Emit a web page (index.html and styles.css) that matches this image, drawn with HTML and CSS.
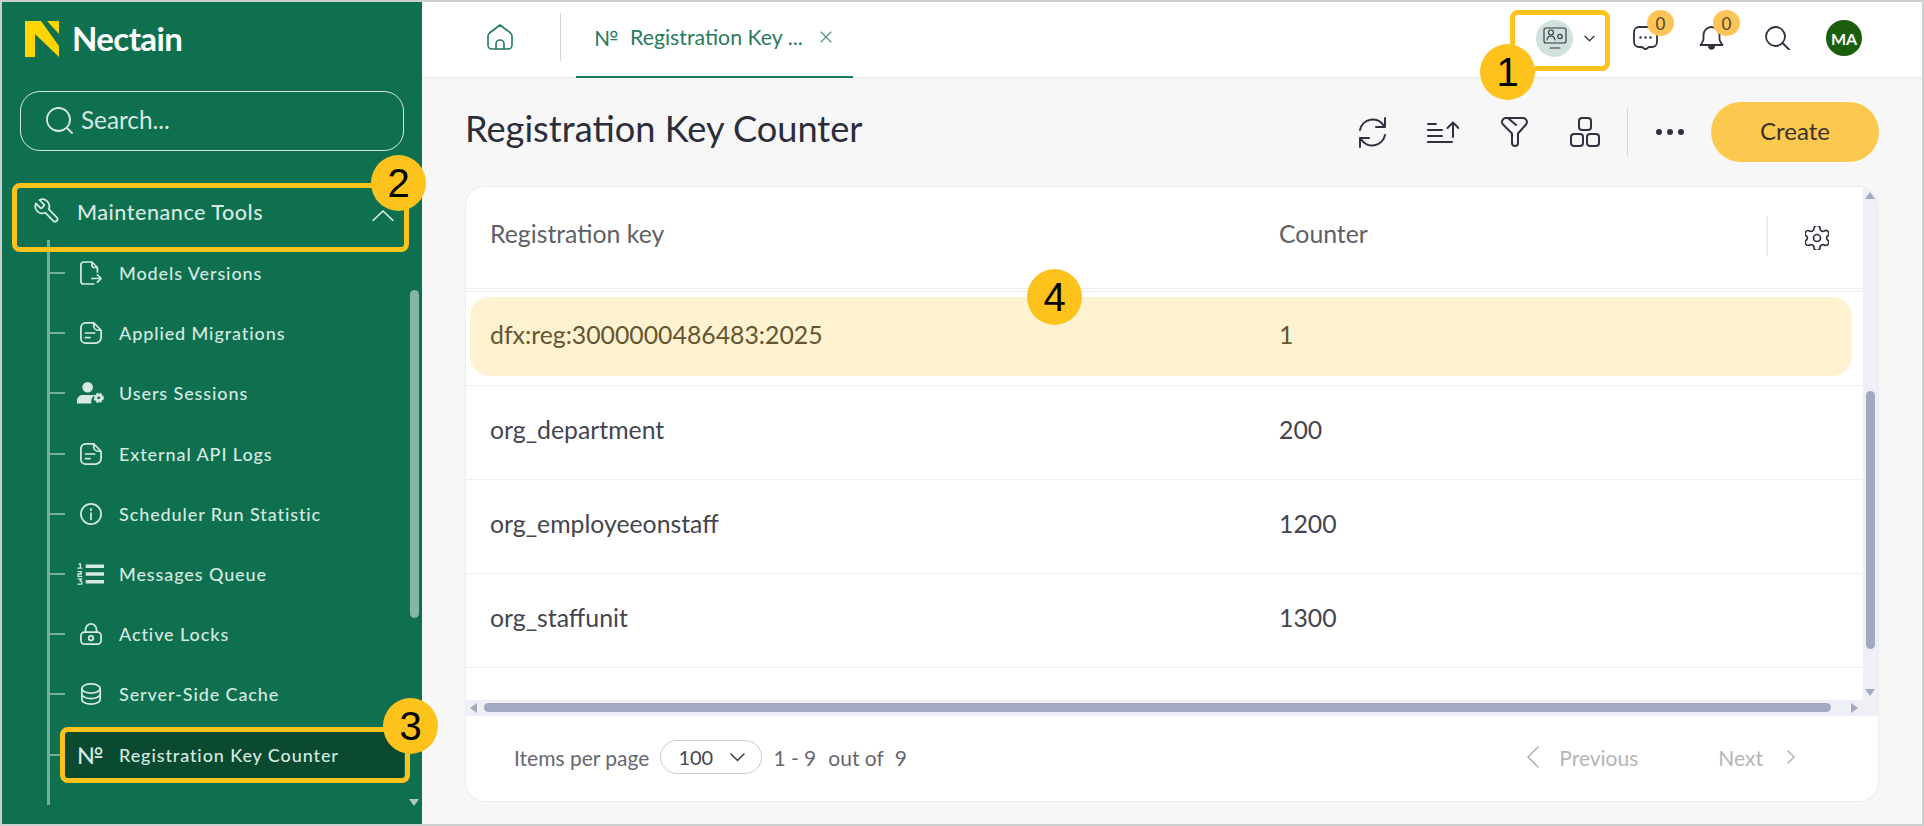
FILE: index.html
```html
<!DOCTYPE html>
<html lang="en">
<head>
<meta charset="utf-8">
<title>Registration Key Counter</title>
<link rel="stylesheet" href="styles.css">
</head>
<body>
<div class="frame">
  <aside class="sidebar">
    <div class="brand">
      <svg class="brand-mark" viewBox="0 0 34 36"><path fill="#ffd500" d="M0 0H16L34 25V36L10 13V36H0Z"/><path fill="#ffd500" d="M22 0H34V13Z"/></svg>
      <span class="brand-name">Nectain</span>
    </div>
    <div class="search">
      <svg class="search-icon" viewBox="0 0 27 27"><circle cx="12.5" cy="12.5" r="11.5"/><path d="M21 21l5 5"/></svg>
      <span>Search...</span>
    </div>
    <div class="group-head">
      <svg class="group-icon" viewBox="0 0 24 24"><path transform="translate(24,0) scale(-1,1)" d="M14.7 6.3a1 1 0 0 0 0 1.4l1.600 1.600a1 1 0 0 0 1.400 0l3.770-3.770a6 6 0 0 1-7.940 7.940l-6.910 6.910a2.120 2.120 0 0 1-3-3l6.910-6.910a6 6 0 0 1 7.940-7.940l-3.760 3.760z"/></svg>
      <span class="group-label">Maintenance Tools</span>
      <svg class="group-chevron" viewBox="0 0 22 11"><path d="M1 10.500L11 1l10 9.500"/></svg>
    </div>
    <div class="nav-wrap">
      <ul class="nav">
        <li class="nav-item"><svg class="nav-icon" viewBox="0 0 24 26"><path d="M19 12V7l-6-6H4a3 3 0 0 0-3 3v18a3 3 0 0 0 3 3h11M13 1v3a3 3 0 0 0 3 3h3M13 19h10M19 15l4 4-4 4"/></svg><span>Models Versions</span></li>
        <li class="nav-item"><svg class="nav-icon" viewBox="0 0 24 24"><path d="M6 1h9l8 8v8a6 6 0 0 1-6 6H6a5 5 0 0 1-5-5V6a5 5 0 0 1 5-5zM15 1v3a5 5 0 0 0 5 5h3M6 12h10M6 17h5"/></svg><span>Applied Migrations</span></li>
        <li class="nav-item"><svg class="nav-icon nav-icon-wide" viewBox="0 0 29 24"><circle class="solid" cx="11" cy="6" r="5.500"/><path class="solid" d="M0 23v-3c0-4 3-6 6-6h9c2 0 3 .5 3 .5a8 8 0 0 0-3 8.500z"/><circle class="gear" cx="22.500" cy="17" r="4"/><circle class="gear-hole" cx="22.500" cy="17" r="1.500"/></svg><span>Users Sessions</span></li>
        <li class="nav-item"><svg class="nav-icon" viewBox="0 0 24 24"><path d="M6 1h9l8 8v8a6 6 0 0 1-6 6H6a5 5 0 0 1-5-5V6a5 5 0 0 1 5-5zM15 1v3a5 5 0 0 0 5 5h3M6 12h10M6 17h5"/></svg><span>External API Logs</span></li>
        <li class="nav-item"><svg class="nav-icon" viewBox="0 0 24 24"><circle cx="12" cy="12" r="11"/><path d="M12 11v7M12 6.500v1.500"/></svg><span>Scheduler Run Statistic</span></li>
        <li class="nav-item"><svg class="nav-icon nav-icon-wide" viewBox="0 0 29 22"><path class="thick" d="M9 3h19M9 11h19M9 19h19"/><path class="thin" d="M2 .8l1.500-.5V5M1 5h4M1 8.500h3.500v2.500H1v2.500h4M1 16h4l-2 2 2 1v2.500H1"/></svg><span>Messages Queue</span></li>
        <li class="nav-item"><svg class="nav-icon" viewBox="0 0 24 24"><rect x="1" y="10" width="22" height="13" rx="4"/><path d="M6 10V7a6 6 0 0 1 12 0v3"/><circle cx="12" cy="16.500" r="2.500"/></svg><span>Active Locks</span></li>
        <li class="nav-item"><svg class="nav-icon" viewBox="0 0 24 24"><ellipse cx="12" cy="6" rx="10" ry="5"/><path d="M2 6v12c0 3 4.500 5 10 5s10-2 10-5V6M2 12c0 3 4.500 5 10 5s10-2 10-5"/></svg><span>Server-Side Cache</span></li>
        <li class="nav-item nav-item-active"><span class="nav-no">№</span><span>Registration Key Counter</span></li>
      </ul>
      <div class="side-scroll">
        <div class="side-thumb"></div>
        <div class="side-arrow"></div>
      </div>
    </div>
  </aside>

  <main class="main">
    <header class="topbar">
      <div class="home-cell">
        <svg class="home-icon" viewBox="0 0 26 26"><path d="M13 1L2.500 9A4 4 0 0 0 1 12v9a4 4 0 0 0 4 4h16a4 4 0 0 0 4-4v-9a4 4 0 0 0-1.500-3zM9 25v-5a4 4 0 0 1 8 0v5"/></svg>
      </div>
      <div class="tab">
        <span class="tab-no">№</span>
        <span class="tab-title">Registration Key ...</span>
        <svg class="tab-close" viewBox="0 0 12 12"><path d="M1 1l10 10M11 1L1 11"/></svg>
      </div>
      <div class="top-actions">
        <div class="view-switch">
          <span class="view-circle">
            <svg class="view-icon" viewBox="0 0 24 24"><rect x="1" y="2" width="22" height="15" rx="2"/><path d="M7 22h10M4 14c.500-3 2-4 4-4s3.500 1 4 4"/><circle cx="8" cy="6.500" r="2.500"/><circle cx="17" cy="10.500" r="2.200"/></svg>
          </span>
          <svg class="view-chevron" viewBox="0 0 12 7"><path d="M1 1l5 5 5-5"/></svg>
        </div>
        <div class="top-icon top-chat">
          <svg viewBox="0 0 25 24"><path d="M6 1h13a5 5 0 0 1 5 5v10a5 5 0 0 1-5 5h-3l-3.500 2.500L9 21H6a5 5 0 0 1-5-5V6a5 5 0 0 1 5-5z"/><path class="dots" d="M7.500 11.500h.1M12.500 11.500h.1M17.500 11.500h.1"/></svg>
          <span class="count">0</span>
        </div>
        <div class="top-icon top-bell">
          <svg viewBox="0 0 25 24"><path d="M12.500 1a8 8 0 0 0-8 8v4c0 2-1.500 4-3 6h22c-1.500-2-3-4-3-6V9a8 8 0 0 0-8-8z"/><path class="solid-dark" d="M9 20h7c0 5-7 5-7 0z"/></svg>
          <span class="count">0</span>
        </div>
        <svg class="top-search" viewBox="0 0 26 24"><circle cx="10.500" cy="10.500" r="9.500"/><path d="M17.500 17l7 7"/></svg>
        <span class="avatar">MA</span>
      </div>
    </header>

    <section class="content">
      <div class="title-row">
        <h1 class="page-title">Registration Key Counter</h1>
        <div class="tools">
          <svg class="tool tool-refresh" viewBox="0 0 31 31"><path d="M3 13A13 13 0 0 1 27 9M28 1v9h-9M28 18A13 13 0 0 1 4 22M3 30v-9h9"/></svg>
          <svg class="tool tool-sort" viewBox="0 0 32 22"><path d="M1 3h8M1 9h14M1 15h14M1 21h24M26 16V2M20.500 7L26 1.500 31.500 7"/></svg>
          <svg class="tool tool-filter" viewBox="0 0 28 30"><path d="M5 1h18a4 4 0 0 1 3 6.500l-8 9V26a3 3 0 0 1-6 0v-9.500l-9-9A4 4 0 0 1 5 1zM8 1l8 7"/></svg>
          <svg class="tool tool-shapes" viewBox="0 0 30 30"><rect x="9" y="1" width="12" height="12" rx="3"/><rect x="1" y="17" width="12" height="12" rx="3"/><rect x="17" y="17" width="12" height="12" rx="3"/></svg>
          <span class="tools-divider"></span>
          <svg class="tool-more" viewBox="0 0 28 6"><circle cx="3" cy="3" r="3"/><circle cx="14" cy="3" r="3"/><circle cx="25" cy="3" r="3"/></svg>
          <button class="create-btn" type="button">Create</button>
        </div>
      </div>

      <div class="card">
        <div class="table-area">
          <div class="table">
            <div class="table-head">
              <div class="cell-key">Registration key</div>
              <div class="cell-count">Counter</div>
              <div class="head-tail">
                <svg class="gear-icon" viewBox="0 0 24 24"><path d="M9 2.500a3 3 0 0 1 6 0 3 3 0 0 0 4.300 2.500 3 3 0 0 1 3 5.200 3 3 0 0 0 0 3.600 3 3 0 0 1-3 5.200A3 3 0 0 0 15 21.500a3 3 0 0 1-6 0A3 3 0 0 0 4.700 19a3 3 0 0 1-3-5.200 3 3 0 0 0 0-3.600 3 3 0 0 1 3-5.200A3 3 0 0 0 9 2.500z"/><circle cx="12" cy="12" r="3.500"/></svg>
              </div>
            </div>
            <div class="row row-selected"><div class="row-pill"><div class="cell-key">dfx:reg:3000000486483:2025</div><div class="cell-count">1</div></div></div>
            <div class="row"><div class="cell-key">org_department</div><div class="cell-count">200</div></div>
            <div class="row"><div class="cell-key">org_employeeonstaff</div><div class="cell-count">1200</div></div>
            <div class="row"><div class="cell-key">org_staffunit</div><div class="cell-count">1300</div></div>
          </div>
          <div class="v-rail">
            <span class="arrow-up"></span>
            <span class="v-thumb"></span>
            <span class="arrow-down"></span>
          </div>
        </div>
        <div class="h-rail">
          <span class="arrow-left"></span>
          <span class="h-thumb"></span>
          <span class="arrow-right"></span>
        </div>
        <footer class="pager">
          <span>Items per page</span>
          <span class="page-select"><span>100</span><svg class="select-chevron" viewBox="0 0 15 9"><path d="M1 1l6.500 6.500L14 1"/></svg></span>
          <span class="range">1 - 9</span>
          <span class="out-of">out of</span>
          <span class="total">9</span>
          <div class="pager-nav">
            <svg class="prev-icon" viewBox="0 0 13 22"><path d="M12 1L2 11l10 10"/></svg>
            <span class="prev-label">Previous</span>
            <span class="next-label">Next</span>
            <svg class="next-icon" viewBox="0 0 8 14"><path d="M1 1l6 6-6 6"/></svg>
          </div>
        </footer>
      </div>
    </section>
  </main>

  <div class="mark-box mark-box-1"></div>
  <div class="mark-box mark-box-2"></div>
  <div class="mark-box mark-box-3"></div>
  <div class="callout callout-1">1</div>
  <div class="callout callout-2">2</div>
  <div class="callout callout-3">3</div>
  <div class="callout callout-4">4</div>
</div>
</body>
</html>
```
FILE: styles.css
```css
* { box-sizing: border-box; }
html, body { margin: 0; padding: 0; }
body { width: 1924px; height: 826px; overflow: hidden; font-family: Lato, "Noto Sans", sans-serif; color: #2b2d3a; }
.frame { position: relative; display: flex; width: 1924px; height: 826px; border: 2px solid #cbcfcd; background: #f7f7f8; overflow: hidden; }
svg { display: block; fill: none; stroke: currentColor; stroke-linecap: round; stroke-linejoin: round; flex: none; }

/* Sidebar */
.sidebar { width: 420px; flex: none; background: #0f7050; color: #d6e9e1; display: flex; flex-direction: column; }
.brand { display: flex; align-items: center; height: 36px; margin: 19px 0 0 23px; }
.brand-mark { width: 34px; height: 36px; stroke: none; }
.brand-name { margin: -3px 0 0 13px; font-size: 33px; font-weight: 700; color: #fff; letter-spacing: -0.6px; }
.search { display: flex; align-items: center; width: 384px; height: 60px; margin: 34px 0 0 18px; border: 1px solid #d6e9e1; border-radius: 20px; padding-left: 25px; font-size: 24.300px; color: #d6e9e1; }
.search span { margin-top: -4px; }
.search-icon { width: 27px; height: 27px; margin: -1px 8px 0 0; stroke-width: 1.800; }
.group-head { display: flex; align-items: center; height: 69px; margin: 30px 0 0 10px; width: 397px; padding: 0 15px 0 22px; font-size: 21.600px; letter-spacing: 0.5px; position: relative; }
.group-icon { width: 28px; height: 28px; stroke-width: 1.500; margin-top: -9px; margin-left: -1px; }
.group-label { margin-left: 16px; font-weight: 500; margin-top: -7px; }
.group-chevron { width: 22px; height: 11px; margin-left: auto; stroke-width: 1.700; }
.nav-wrap { display: flex; flex: 1; position: relative; }
.nav { list-style: none; margin: -10px 0 0 45px; padding: 3px 0 17px 0; width: 351px; border-left: 3px solid #76ae9a; height: 565px; flex: none; }
.nav-item { position: relative; display: flex; align-items: center; height: 60.200px; padding-left: 28px; font-size: 18px; font-weight: 700; letter-spacing: 0.9px; white-space: nowrap; }
.nav-item::before { content: ""; position: absolute; left: 0; top: 29px; width: 15px; height: 2px; background: #76ae9a; }
.nav-item > span:last-child { margin-left: 17px; font-weight: 500; }
.nav-icon { width: 22px; height: 24px; stroke-width: 1.900; margin-left: 2px; margin-right: 0; }
.nav-icon + span { margin-left: 17px; }
.nav-icon-wide { width: 28px; margin-left: -1px; margin-right: -3px; }
.nav-icon .solid { fill: #d6e9e1; stroke: none; }
.nav-icon .gear { fill: #d6e9e1; stroke: #d6e9e1; stroke-width: 2.500; stroke-dasharray: 2.200 1.000; stroke-linecap: butt; }
.nav-icon .gear-hole { fill: #0f7050; stroke: none; }
.nav-icon .thick { stroke-width: 3.500; stroke-linecap: butt; }
.nav-icon .thin { stroke-width: 1.300; }
.nav-no { width: 25px; font-size: 23px; font-weight: 500; margin-left: 0; letter-spacing: 0; }
.nav-item-active { width: 342px; height: 50px; margin: 5px 0 0 12px; padding-left: 15px; border-radius: 5px; background: #0a4a30; }
.nav-item-active::before { left: -12px; width: 13px; top: 24px; }
.side-scroll { position: relative; flex: 1; }
.side-thumb { position: absolute; left: 12px; top: 40px; width: 9px; height: 328px; border-radius: 5px; background: #87b5a3; }
.side-arrow { position: absolute; left: 11px; top: 549px; border-left: 5px solid transparent; border-right: 5px solid transparent; border-top: 7px solid #a9cbbc; }

/* Top bar */
.main { flex: 1; min-width: 0; display: flex; flex-direction: column; }
.topbar { display: flex; align-items: stretch; height: 76px; flex: none; background: #fff; border-bottom: 1px solid #e9e9e9; }
.home-cell { width: 139px; height: 48px; margin-top: 11px; border-right: 1px solid #d8d8d8; display: flex; align-items: center; padding-left: 65px; flex: none; }
.home-icon { width: 26px; height: 26px; color: #1f7a5c; stroke-width: 1.600; margin-top: -1px; }
.tab { display: flex; align-items: center; width: 277px; height: 76px; margin-left: 15px; padding: 0 0 4px 18px; border-bottom: 2px solid #1f7a5c; color: #2a7a60; font-size: 21.300px; flex: none; }
.tab-no { width: 36px; font-size: 21px; }
.tab-title { width: 190px; white-space: nowrap; }
.tab-close { width: 12px; height: 12px; color: #4f8d7a; stroke-width: 1.100; }
.top-actions { display: flex; align-items: center; margin-left: auto; height: 72px; padding-right: 60px; color: #2f3140; }
.view-switch { display: flex; align-items: center; margin-right: 38px; }
.view-circle { display: flex; align-items: center; justify-content: center; width: 37px; height: 37px; border-radius: 50%; background: #d0e2dc; }
.view-icon { width: 24px; height: 24px; stroke-width: 1.100; }
.view-chevron { width: 11px; height: 7px; margin-left: 11px; stroke-width: 1.300; }
.top-icon { position: relative; width: 25px; height: 24px; margin-right: 41px; }
.top-icon svg { width: 25px; height: 24px; stroke-width: 1.800; }
.dots { stroke-width: 2.400; }
.solid-dark { fill: #2f3140; stroke: none; }
.count { position: absolute; left: 14px; top: -16px; width: 27px; height: 26px; border-radius: 50%; background: #fdc557; color: #4d4733; font-size: 17px; display: flex; align-items: center; justify-content: center; }
.top-search { width: 26px; height: 24px; stroke-width: 1.800; margin-right: 35px; }
.avatar { display: flex; align-items: center; justify-content: center; width: 36px; height: 36px; border-radius: 50%; background: #1b5e0d; color: #fff; font-size: 16px; font-weight: 700; }

/* Content */
.content { flex: 1; padding: 0 43px 22px 43px; display: flex; flex-direction: column; min-height: 0; }
.title-row { display: flex; align-items: center; justify-content: space-between; height: 108px; flex: none; }
.page-title { margin: 0 0 9px; font-size: 36.200px; font-weight: 400; color: #2b2d3a; }
.tools { display: flex; align-items: center; color: #2f3140; }
.tool { stroke-width: 2; }
.tool-refresh { width: 31px; height: 31px; margin-right: 39px; }
.tool-sort { width: 32px; height: 22px; margin-right: 41px; }
.tool-filter { width: 28px; height: 30px; margin-right: 42px; }
.tool-shapes { width: 30px; height: 30px; }
.tools-divider { width: 1px; height: 48px; background: #d8d8d8; margin: 0 28px 0 27px; }
.tool-more { width: 28px; height: 6px; fill: #2f3140; stroke: none; margin-right: 27px; }
.create-btn { width: 168px; height: 60px; border: 0; border-radius: 30px; background: #fdc84f; color: #3a3528; font: 400 24px Lato, sans-serif; padding-bottom: 4px; }
.card { flex: 1; min-height: 0; display: flex; flex-direction: column; background: #fff; border: 1px solid #ececec; border-radius: 20px; overflow: hidden; }

/* Table */
.table-area { display: flex; height: 513px; flex: none; }
.table { width: 1397px; flex: none; overflow: hidden; }
.table-head { display: flex; align-items: center; height: 102px; padding-bottom: 8px; border-bottom: 1px solid #eeeeee; font-size: 24.800px; color: #5f6068; box-shadow: 0 2px 0 #fff, 0 3px 0 #eeeeee; }
.cell-key { width: 813px; padding-left: 24px; flex: none; }
.cell-count { flex: none; }
.head-tail { flex: 1; margin-top: 4px; align-self: center; height: 40px; display: flex; align-items: center; justify-content: flex-end; padding-right: 34px; position: relative; }
.head-tail::before { content: ""; position: absolute; right: 95px; top: 0; width: 2px; height: 40px; background: #eeeeee; }
.gear-icon { width: 24px; height: 24px; stroke-width: 1.700; color: #2f3140; margin-top: 4px; }
.row { display: flex; align-items: center; height: 94px; padding-bottom: 7px; border-bottom: 1px solid #eeeeee; font-size: 24.800px; color: #44454e; }
.row-selected { padding: 0 11px 0 4px; height: 94px; margin-top: 3px; }
.row-pill { display: flex; align-items: center; width: 100%; height: 79px; margin-top: -4px; padding-bottom: 4px; border-radius: 20px; background: #fef2d0; color: #64552f; }
.row-pill .cell-key { width: 809px; padding-left: 20px; }
.v-rail { position: relative; width: 16px; flex: none; background: #eef0f6; }
.v-thumb { position: absolute; left: 3px; top: 204px; width: 9px; height: 258px; border-radius: 5px; background: #a3a9c2; }
.arrow-up { position: absolute; left: 2px; top: 5px; border-left: 5px solid transparent; border-right: 5px solid transparent; border-bottom: 7px solid #a3a9c2; }
.arrow-down { position: absolute; left: 2px; top: 502px; border-left: 5px solid transparent; border-right: 5px solid transparent; border-top: 7px solid #a3a9c2; }
.h-rail { position: relative; height: 16px; flex: none; background: #eef0f6; }
.h-thumb { position: absolute; left: 18px; top: 3px; height: 9px; width: 1347px; border-radius: 5px; background: #a3a9c2; }
.arrow-left { position: absolute; left: 4px; top: 3px; border-top: 5px solid transparent; border-bottom: 5px solid transparent; border-right: 7px solid #a3a9c2; }
.arrow-right { position: absolute; left: 1385px; top: 3px; border-top: 5px solid transparent; border-bottom: 5px solid transparent; border-left: 7px solid #a3a9c2; }

/* Pager */
.pager { flex: 1; display: flex; align-items: center; padding: 0 0 3px 48px; font-size: 21px; color: #666870; white-space: nowrap; }
.page-select { display: flex; align-items: center; width: 102px; height: 34px; margin: 0 11px 0 11px; padding-left: 17px; border: 1px solid #cccccc; border-radius: 17px; color: #44454d; font-size: 20px; }
.select-chevron { width: 15px; height: 9px; margin-left: 17px; stroke-width: 1.500; color: #3a3b44; }
.out-of { margin-left: 12px; }
.total { margin-left: 11px; }
.pager-nav { display: flex; align-items: center; margin-left: auto; padding-right: 83px; color: #b5b5b5; }
.prev-icon { width: 13px; height: 22px; stroke-width: 1.700; }
.prev-label { margin-left: 20px; }
.next-label { margin-left: 80px; }
.next-icon { width: 8px; height: 14px; margin-left: 24px; stroke-width: 1.500; }

/* Callouts */
.mark-box { position: absolute; border: 5px solid #fdc21c; border-radius: 8px; pointer-events: none; }
.mark-box-1 { left: 1508px; top: 8px; width: 100px; height: 61px; }
.mark-box-2 { left: 10px; top: 181px; width: 397px; height: 69px; }
.mark-box-3 { left: 58px; top: 725px; width: 350px; height: 56px; }
.callout { position: absolute; width: 55px; height: 56px; border-radius: 50%; background: #fdc21c; color: #000; font: 400 40px/56px "Liberation Sans", sans-serif; text-align: center; }
.callout-1 { left: 1478px; top: 42px; }
.callout-2 { left: 369px; top: 153px; }
.callout-3 { left: 381px; top: 696px; }
.callout-4 { left: 1025px; top: 267px; }
```
